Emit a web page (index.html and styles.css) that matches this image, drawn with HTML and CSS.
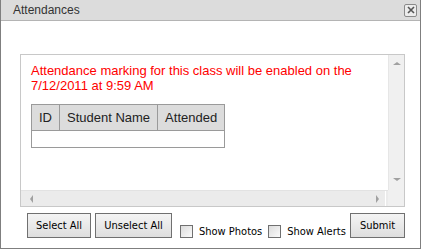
FILE: index.html
```html
<html><head>
<meta charset="UTF-8">
<meta name="viewport" content="width=device-width, initial-scale=1.0">
<title>Attendances</title>
<link rel="stylesheet" href="styles.css">
</head>
<body>
  <div class="dialog">
    <div class="titlebar">
      <span class="title">Attendances</span>
      <span class="close">
        <svg width="8" height="8" viewBox="0 0 8 8"><path d="M1 1 L7 7 M7 1 L1 7" stroke="#555" stroke-width="1.6" fill="none"/></svg>
      </span>
    </div>

    <div class="dialog-body">
      <div class="panel">
        <div class="panel-content">
          <div class="notice">Attendance marking for this class will be enabled on the 7/12/2011 at 9:59 AM</div>
          <table class="grid">
            <tr>
              <th>ID</th>
              <th>Student Name</th>
              <th>Attended</th>
            </tr>
            <tr class="empty">
              <td colspan="3"></td>
            </tr>
          </table>
        </div>
        <div class="vscroll">
          <span class="arrow up"></span>
          <span class="arrow down"></span>
        </div>
        <div class="hscroll">
          <span class="arrow left"></span>
          <span class="thumb-edge"></span>
          <span class="arrow right"></span>
        </div>
        <div class="corner"></div>
      </div>
    </div>

    <div class="footer">
      <button class="btn btn-select">Select All</button>
      <button class="btn btn-unselect">Unselect All</button>
      <label class="check"><span class="box"></span>Show Photos</label>
      <label class="check check-last"><span class="box"></span>Show Alerts</label>
      <button class="btn btn-submit">Submit</button>
    </div>
  </div>
</body>
</html>
```

FILE: styles.css
```css
body, html {
  margin: 0;
  padding: 0;
  background-color: #fff;
}
.dialog {
  box-sizing: border-box;
  width: 421px;
  height: 249px;
  border: 1px solid #7f7f7f;
  border-top: none;
  background-color: #fff;
  font-family: "Liberation Sans", Arial, sans-serif;
  display: flex;
  flex-direction: column;
}
.titlebar {
  height: 20px;
  background-color: #dcdcdc;
  border-bottom: 1px solid #b4b4b4;
  display: flex;
  align-items: center;
  justify-content: space-between;
  padding: 0 3px 0 12px;
}
.title {
  font-size: 12px;
  color: #333;
}
.close {
  box-sizing: border-box;
  width: 13px;
  height: 13px;
  border: 1px solid #8a8a8a;
  border-radius: 2px;
  background-color: #ececec;
  display: flex;
  align-items: center;
  justify-content: center;
}
.dialog-body {
  padding: 33px 15px 0 19px;
}
.panel {
  box-sizing: border-box;
  height: 153px;
  border: 1px solid #c8c8c8;
  display: grid;
  grid-template-columns: 1fr 16px;
  grid-template-rows: 1fr 16px;
}
.panel-content {
  padding: 8px 10px 0 10px;
  overflow: hidden;
}
.notice {
  color: #f00;
  font-size: 13px;
  line-height: 15px;
}
.grid {
  margin-top: 11px;
  border-collapse: collapse;
  font-size: 13px;
  color: #222;
}
.grid th {
  background-color: #dcdcdc;
  border: 1px solid #9a9a9a;
  font-weight: normal;
  padding: 5px 7px;
  height: 15px;
  line-height: 15px;
}
.grid td {
  border: 1px solid #9a9a9a;
  height: 17px;
  padding: 0;
}
.vscroll {
  background-color: #f0f0f0;
  border-left: 1px solid #e6e6e6;
  position: relative;
}
.hscroll {
  background-color: #ebebeb;
  border-top: 1px solid #e2e2e2;
  position: relative;
}
.corner {
  background-color: #f0f0f0;
}
.arrow {
  position: absolute;
  width: 0;
  height: 0;
  border: 3px solid transparent;
}
.arrow.up {
  top: 7px;
  left: 4px;
  border-bottom: 3px solid #a0a0a0;
  border-top: none;
  border-left-width: 4px;
  border-right-width: 4px;
}
.arrow.down {
  bottom: 9px;
  left: 4px;
  border-top: 3px solid #a0a0a0;
  border-bottom: none;
  border-left-width: 4px;
  border-right-width: 4px;
}
.arrow.left {
  left: 9px;
  top: 4px;
  border-right: 3px solid #a0a0a0;
  border-left: none;
  border-top-width: 4px;
  border-bottom-width: 4px;
}
.arrow.right {
  right: 9px;
  top: 4px;
  border-left: 3px solid #a0a0a0;
  border-right: none;
  border-top-width: 4px;
  border-bottom-width: 4px;
}
.thumb-edge {
  position: absolute;
  right: 2px;
  top: 0;
  bottom: 0;
  width: 1px;
  background-color: #fff;
}
.footer {
  display: flex;
  align-items: flex-end;
  padding: 6px 15px 0 26px;
  font-family: "DejaVu Sans Condensed", "Liberation Sans", sans-serif;
  font-size: 11px;
  color: #000;
  white-space: nowrap;
}
.btn {
  box-sizing: border-box;
  flex-shrink: 0;
  height: 25px;
  font-family: inherit;
  font-size: 11px;
  color: #000;
  padding: 0;
  border: 1px solid #707070;
  border-radius: 0;
  background: linear-gradient(#f4f4f4, #dedede);
  white-space: nowrap;
}
.btn-select {
  width: 64px;
  margin-right: 4px;
}
.btn-unselect {
  width: 77px;
  margin-right: 8px;
}
.btn-submit {
  width: 55px;
  margin-left: auto;
}
.check {
  display: flex;
  align-items: flex-end;
  flex-shrink: 0;
  line-height: 12px;
  margin-right: 6px;
}
.check-last {
  margin-right: 0;
}
.box {
  box-sizing: border-box;
  width: 13px;
  height: 13px;
  border: 1px solid #707070;
  background: linear-gradient(135deg, #dcdcdc, #fafafa);
  margin-right: 6px;
}
```
